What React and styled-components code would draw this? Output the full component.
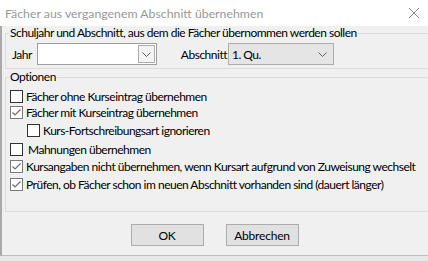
import React from "react";
import styled, { createGlobalStyle } from "styled-components";

const Global = createGlobalStyle`
  html, body { margin: 0; padding: 0; background: #ffffff; }
  body {
    font-family: Lato, "Liberation Sans", Arial, sans-serif;
    font-size: 12px;
    letter-spacing: -0.5px;
    color: #000;
  }
`;

const Window = styled.div`
  width: 428px;
  height: 261px;
  display: flex;
  flex-direction: column;
  overflow: hidden;
  background: #e8e8e8;
`;

const TitleBar = styled.div`
  height: 26px;
  flex: none;
  display: flex;
  align-items: center;
  justify-content: space-between;
  padding: 0 8px 0 5px;
  background: #ffffff;
  color: #999999;
  font-size: 12.3px;
  letter-spacing: 0;
`;

const Close = styled.svg`
  width: 12px;
  height: 12px;
`;

const Body = styled.div`
  height: 229px;
  flex: none;
  display: flex;
  flex-direction: column;
  background: #f0f0f0;
  border-left: 2px solid #a9a9a9;
  border-bottom: 1px solid #bdbdbd;
  overflow: hidden;
`;

const Group = styled.fieldset`
  margin: ${(p) => p.$top}px -20px 0 3px;
  padding: 0 0 ${(p) => p.$bottom}px 0;
  border: 1px solid #dcdcdc;
  min-inline-size: 0;
`;

const Legend = styled.legend`
  padding: 0 1px;
  margin-left: 3px;
  line-height: 14px;
`;

const ComboRow = styled.div`
  display: flex;
  align-items: center;
  height: 22px;
  margin-top: 3px;
  padding-left: 6px;
`;

const Label = styled.span`
  margin-right: ${(p) => p.$gap}px;
`;

const Combo = styled.div`
  box-sizing: border-box;
  width: ${(p) => p.$w}px;
  height: 22px;
  display: flex;
  align-items: center;
  justify-content: space-between;
  padding: ${(p) => (p.$disabled ? "0 6px 0 3px" : "1px")};
  border: 1px solid ${(p) => (p.$disabled ? "#adadad" : "#a0a0a0")};
  background: ${(p) => (p.$disabled ? "#e5e5e5" : "#ffffff")};
  margin-right: ${(p) => p.$gap || 0}px;
`;

const DropButton = styled.div`
  box-sizing: border-box;
  width: 17px;
  height: 18px;
  margin-left: auto;
  display: flex;
  align-items: center;
  justify-content: center;
  border: 1px solid #adadad;
  background: #f4f4f4;
`;

const Chevron = () => (
  <svg width="9" height="5" viewBox="0 0 9 5">
    <polyline points="0.5,0.5 4.5,4.5 8.5,0.5" fill="none" stroke="#606060" strokeWidth="1" />
  </svg>
);

const Options = styled.div`
  display: flex;
  flex-direction: column;
  padding-top: 6px;
`;

const Option = styled.label`
  display: flex;
  align-items: center;
  height: 13px;
  margin-top: ${(p) => p.$top}px;
  padding-left: ${(p) => (p.$indent ? 21 : 4)}px;
  white-space: nowrap;
`;

const Box = styled.span`
  box-sizing: border-box;
  width: 13px;
  height: 13px;
  flex: none;
  display: flex;
  align-items: center;
  justify-content: center;
  background: #ffffff;
  border: 1px solid ${(p) => (p.$checked ? "#7a7a7a" : "#333333")};
  margin-right: ${(p) => p.$gap || 3}px;
`;

const Check = () => (
  <svg width="11" height="11" viewBox="0 0 11 11">
    <polyline points="1.5,5.5 4,8 9.5,2.5" fill="none" stroke="#6e6e6e" strokeWidth="1.2" />
  </svg>
);

const Footer = styled.div`
  display: flex;
  justify-content: center;
  gap: 22px;
  margin-top: 12px;
  padding-right: 1px;
`;

const Button = styled.button`
  box-sizing: border-box;
  width: 73px;
  height: 22px;
  font: inherit;
  letter-spacing: -0.2px;
  color: #000;
  background: #e1e1e1;
  border: 1px solid #adadad;
  padding: 0;
`;

const options = [
  { text: "Fächer ohne Kurseintrag übernehmen", top: 0 },
  { text: "Fächer mit Kurseintrag übernehmen", checked: true, top: 3 },
  { text: "Kurs-Fortschreibungsart ignorieren", indent: true, top: 5 },
  { text: "Mahnungen übernehmen", top: 6, gap: 5 },
  { text: "Kursangaben nicht übernehmen, wenn Kursart aufgrund von Zuweisung wechselt", checked: true, top: 4 },
  { text: "Prüfen, ob Fächer schon im neuen Abschnitt vorhanden sind (dauert länger)", checked: true, top: 5 },
];

export default function App() {
  return (
    <Window>
      <Global />
      <TitleBar>
        <span>Fächer aus vergangenem Abschnitt übernehmen</span>
        <Close viewBox="0 0 12 12">
          <path d="M1 1 L11 11 M11 1 L1 11" stroke="#8a8a8a" strokeWidth="1" />
        </Close>
      </TitleBar>
      <Body>
        <Group $top={0} $bottom={3}>
          <Legend>Schuljahr und Abschnitt, aus dem die Fächer übernommen werden sollen</Legend>
          <ComboRow>
            <Label $gap={5}>Jahr</Label>
            <Combo $w={120} $gap={24}>
              <DropButton>
                <Chevron />
              </DropButton>
            </Combo>
            <Label $gap={1}>Abschnitt</Label>
            <Combo $w={106} $disabled>
              <span>1. Qu.</span>
              <Chevron />
            </Combo>
          </ComboRow>
        </Group>
        <Group $top={1} $bottom={20}>
          <Legend>Optionen</Legend>
          <Options>
            {options.map((o) => (
              <Option key={o.text} $top={o.top} $indent={o.indent}>
                <Box $checked={o.checked} $gap={o.gap}>{o.checked && <Check />}</Box>
                {o.text}
              </Option>
            ))}
          </Options>
        </Group>
        <Footer>
          <Button>OK</Button>
          <Button>Abbrechen</Button>
        </Footer>
      </Body>
    </Window>
  );
}
